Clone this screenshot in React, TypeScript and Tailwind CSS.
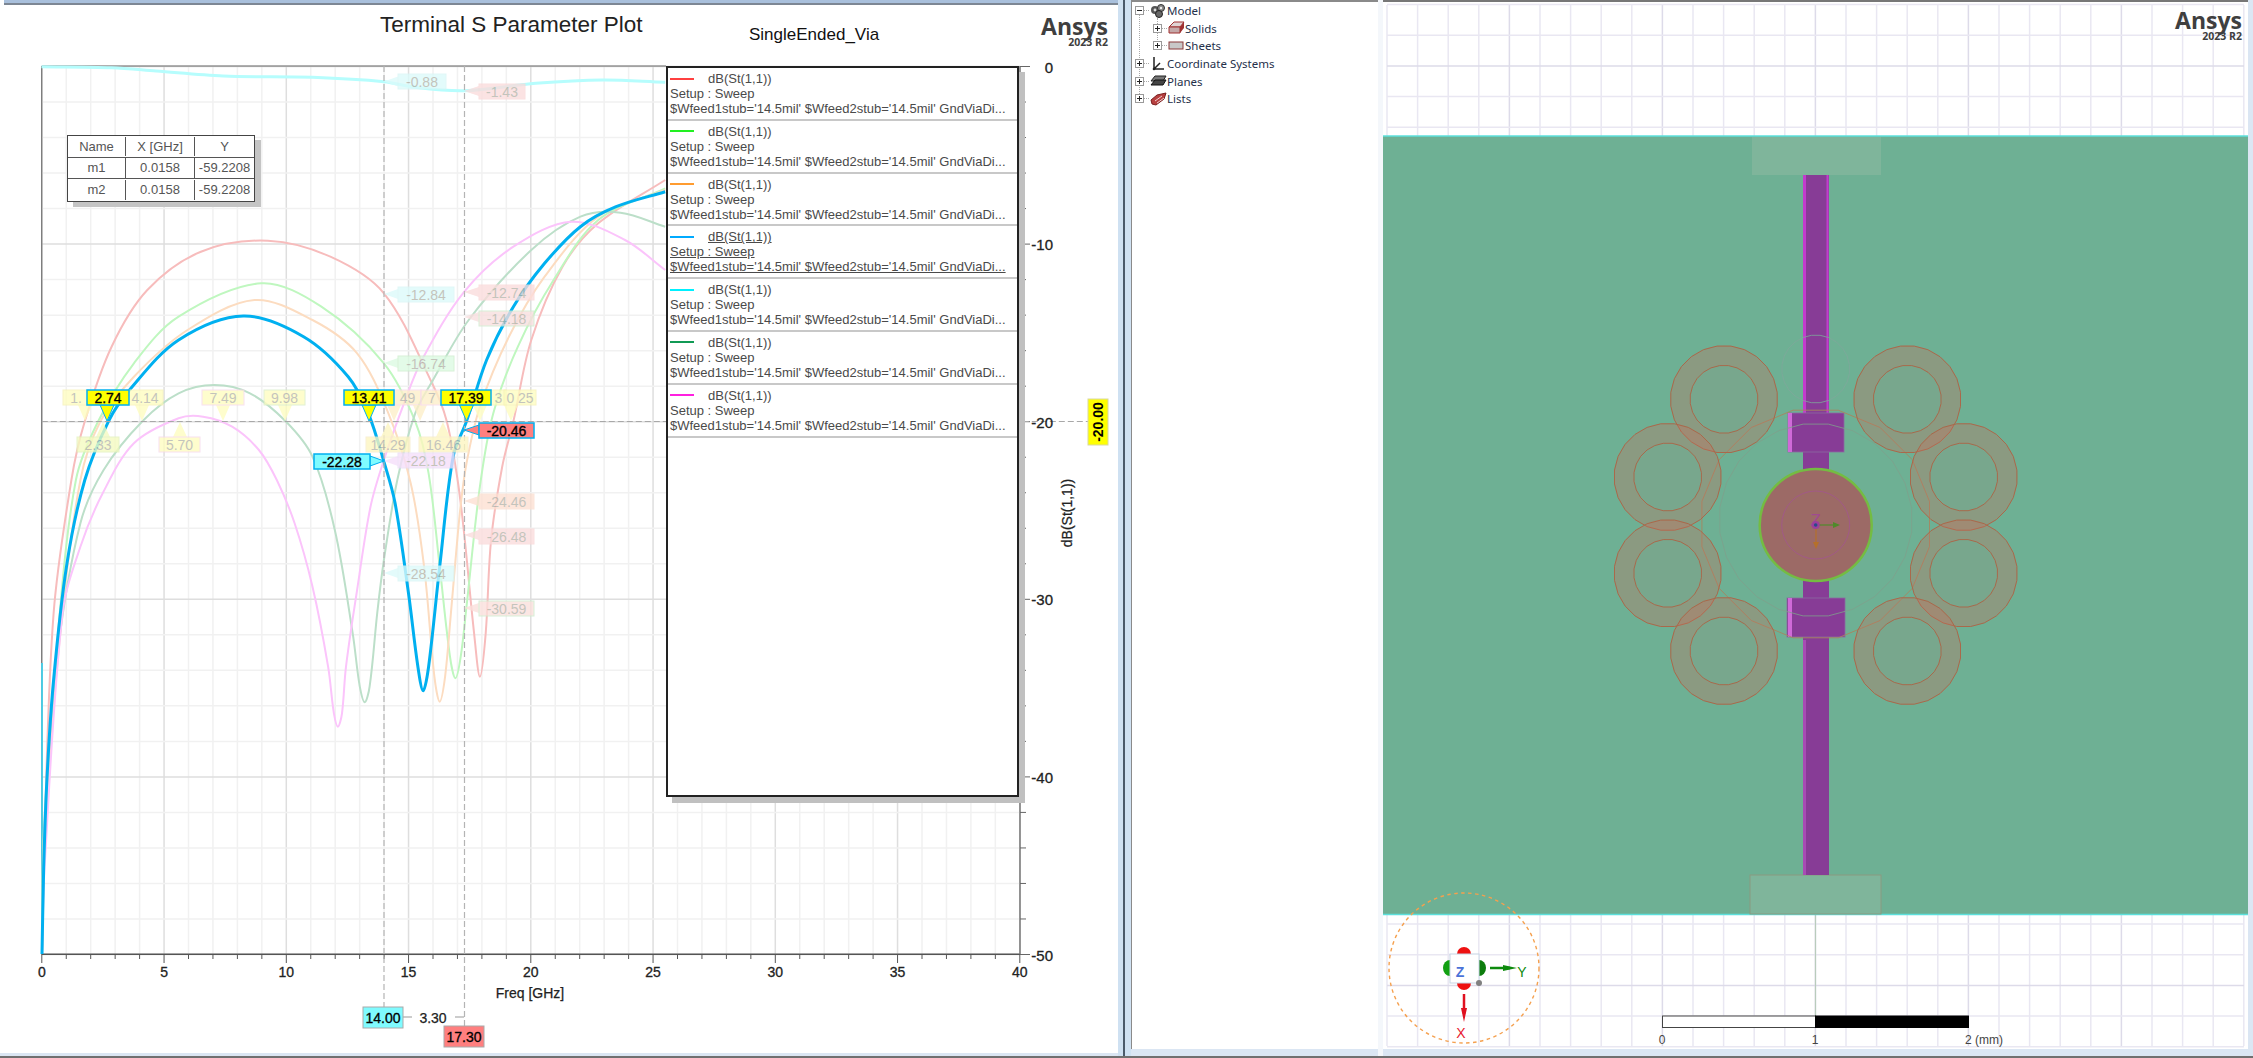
type Pt = [number, number];

// curve points were read off a zoomed crop (x * 2.24, y * 3)
const toPage = (pts: Pt[]): Pt[] => pts.map(([x, y]) => [x / 2.24, y / 3]);

// chord length spline, keeps the arcs clean where the points are unevenly spaced
const smooth = (raw: Pt[]) => {
  const p = toPage(raw);
  const dist = (a: Pt, b: Pt) => Math.hypot(a[0] - b[0], a[1] - b[1]);
  const tangent = (i: number): Pt => {
    const a = p[Math.max(i - 1, 0)];
    const c = p[Math.min(i + 1, p.length - 1)];
    const len = dist(a, p[i]) + dist(p[i], c);
    return [(c[0] - a[0]) / len, (c[1] - a[1]) / len];
  };
  let d = `M${p[0][0].toFixed(1)} ${p[0][1].toFixed(1)}`;
  for (let i = 0; i < p.length - 1; i++) {
    const b = p[i];
    const c = p[i + 1];
    const seg = dist(b, c) / 3;
    const t1 = tangent(i);
    const t2 = tangent(i + 1);
    d += ` C${(b[0] + t1[0] * seg).toFixed(1)} ${(b[1] + t1[1] * seg).toFixed(1)} ${(c[0] - t2[0] * seg).toFixed(1)} ${(c[1] - t2[1] * seg).toFixed(1)} ${c[0].toFixed(1)} ${c[1].toFixed(1)}`;
  }
  return d;
};

const curves: { color: string; width: number; pts: Pt[] }[] = [
  {
    color: "#b6fdfd",
    width: 3,
    pts: [[93, 200], [250, 203], [350, 213], [500, 228], [700, 232], [860, 245], [930, 262], [1040, 272], [1200, 250], [1350, 240], [1490, 247]],
  },
  {
    color: "#f7bcbc",
    width: 2,
    pts: [[94, 2862], [100, 2500], [120, 1840], [160, 1440], [190, 1264], [250, 1040], [330, 870], [450, 755], [600, 722], [740, 770], [860, 880], [968, 1150], [1000, 1260], [1025, 1440], [1040, 1605], [1062, 1900], [1075, 2030], [1088, 1900], [1100, 1620], [1125, 1400], [1150, 1264], [1190, 1020], [1260, 800], [1340, 670], [1490, 540]],
  },
  {
    color: "#bff7bf",
    width: 2,
    pts: [[94, 2862], [99, 2500], [130, 1900], [170, 1440], [220, 1264], [300, 1090], [400, 950], [585, 850], [720, 920], [860, 1090], [930, 1264], [960, 1420], [985, 1700], [1008, 1970], [1020, 2035], [1032, 1970], [1045, 1820], [1075, 1460], [1105, 1240], [1160, 1040], [1240, 840], [1340, 660], [1490, 565]],
  },
  {
    color: "#fcdcc0",
    width: 2,
    pts: [[94, 2862], [100, 2500], [135, 1900], [180, 1440], [225, 1264], [300, 1130], [420, 990], [570, 900], [700, 960], [800, 1060], [870, 1240], [920, 1450], [950, 1700], [973, 2030], [985, 2105], [997, 2030], [1010, 1840], [1030, 1540], [1045, 1390], [1075, 1220], [1140, 1010], [1220, 830], [1340, 650], [1490, 570]],
  },
  {
    color: "#bcdfc9",
    width: 2,
    pts: [[94, 2862], [98, 2500], [130, 1950], [180, 1570], [232, 1410], [320, 1262], [400, 1180], [480, 1155], [560, 1180], [640, 1264], [700, 1370], [750, 1590], [790, 1900], [806, 2060], [817, 2107], [828, 2060], [845, 1840], [860, 1680], [890, 1440], [930, 1240], [970, 1140], [1050, 960], [1190, 750], [1300, 650], [1390, 638], [1490, 680]],
  },
  {
    color: "#fbc4fb",
    width: 2,
    pts: [[94, 2862], [100, 2600], [140, 1840], [180, 1640], [230, 1480], [300, 1330], [400, 1255], [455, 1250], [520, 1280], [580, 1350], [620, 1440], [660, 1570], [700, 1760], [735, 2000], [748, 2140], [757, 2180], [766, 2140], [775, 2000], [800, 1770], [830, 1520], [860, 1380], [905, 1210], [945, 1080], [1040, 875], [1150, 740], [1280, 665], [1400, 720], [1490, 810]],
  },
  {
    color: "#00b0f0",
    width: 3,
    pts: [[94, 2862], [98, 2600], [105, 2340], [120, 2040], [150, 1690], [190, 1440], [243, 1264], [290, 1170], [400, 1020], [545, 948], [680, 1010], [780, 1130], [825, 1240], [860, 1385], [885, 1510], [915, 1780], [936, 2000], [948, 2072], [960, 2000], [985, 1700], [1015, 1370], [1045, 1264], [1090, 1080], [1150, 920], [1220, 790], [1300, 680], [1380, 620], [1490, 575]],
  },
];

const xAt = (ghz: number) => 41.8 + ghz * 24.45;
const yAt = (db: number) => 66.5 + -db * 17.76;
const ghzTicks = Array.from({ length: 41 }, (_, i) => i);
const dbTicks = Array.from({ length: 26 }, (_, i) => i * -2);

type Tag = { x: number; y: number; w: number; h?: number; tx: number; ty: number; text: string; bg: string; line: string; ink?: string };

const Y = { bg: "#fefdc0", line: "#f6f2b6" };
const PINK = { bg: "#fbdcdc", line: "#f9d8d8" };
const CYAN = { bg: "#dcfbfb", line: "#d9f5f5" };
const GREEN = { bg: "#dcfbe2", line: "#cdeecd" };
const LILAC = { bg: "#f6defb", line: "#e9def5" };
const HOT = "#00b0f0";

const tags: Tag[] = [
  { x: 63, y: 390, w: 26, tx: 85, ty: 421, text: "1.", ...Y },
  { x: 127, y: 390, w: 36, tx: 142, ty: 421, text: "4.14", ...Y },
  { x: 202, y: 390, w: 42, tx: 223, ty: 421, text: "7.49", bg: "#fefdc0", line: "#f8d8ec" },
  { x: 264, y: 390, w: 41, tx: 285, ty: 421, text: "9.98", bg: "#fefdc0", line: "#d8ecc8" },
  { x: 394, y: 390, w: 27, tx: 394, ty: 421, text: "49", bg: "#fdefc8", line: "#f8d8ec" },
  { x: 421, y: 390, w: 22, tx: 420, ty: 421, text: "7", bg: "#fdefc8", line: "#f8d8ec" },
  { x: 491, y: 390, w: 15, tx: 480, ty: 421, text: "3", ...Y },
  { x: 504, y: 390, w: 32, tx: 511, ty: 421, text: "0 25", ...Y },
  { x: 77, y: 437, w: 42, tx: 103, ty: 422, text: "2.33", bg: "#f4fbc0", line: "#e2f2bb" },
  { x: 159, y: 437, w: 41, tx: 180, ty: 422, text: "5.70", bg: "#fefdc0", line: "#f8d8ec" },
  { x: 366, y: 437, w: 44, tx: 388, ty: 422, text: "14.29", bg: "#fdf6c0", line: "#f8ecc8" },
  { x: 419, y: 437, w: 49, tx: 443, ty: 422, text: "16.46", bg: "#fdf6c0", line: "#f8ecc8" },
  { x: 398, y: 74, w: 48, tx: 384, ty: 81.5, text: "-0.88", ...CYAN },
  { x: 479, y: 84, w: 46, tx: 464, ty: 91, text: "-1.43", ...PINK },
  { x: 398, y: 287, w: 56, tx: 384, ty: 294, text: "-12.84", ...CYAN },
  { x: 479, y: 285, w: 55, tx: 464, ty: 292, text: "-12.74", ...PINK },
  { x: 479, y: 311, w: 55, tx: 464, ty: 317, text: "-14.18", bg: "#f8dede", line: "#cdeecd" },
  { x: 398, y: 356, w: 56, tx: 384, ty: 363, text: "-16.74", ...GREEN },
  { x: 398, y: 453, w: 56, tx: 384, ty: 461, text: "-22.18", ...LILAC },
  { x: 479, y: 494, w: 55, tx: 464, ty: 501, text: "-24.46", bg: "#fddfd2", line: "#fbe0d0" },
  { x: 479, y: 529, w: 55, tx: 464, ty: 535, text: "-26.48", ...PINK },
  { x: 398, y: 566, w: 56, tx: 384, ty: 573, text: "-28.54", ...CYAN },
  { x: 479, y: 601, w: 55, tx: 464, ty: 608, text: "-30.59", bg: "#fbe0dc", line: "#cdeecd" },
];

const hotTags: Tag[] = [
  { x: 87, y: 390, w: 42, tx: 107, ty: 421, text: "2.74", bg: "#ffff00", line: HOT, ink: "#000" },
  { x: 344, y: 390, w: 50, tx: 369, ty: 421, text: "13.41", bg: "#ffff00", line: HOT, ink: "#000" },
  { x: 441, y: 390, w: 50, tx: 466.5, ty: 421, text: "17.39", bg: "#ffff00", line: HOT, ink: "#000" },
  { x: 479, y: 423, w: 55, tx: 464, ty: 430, text: "-20.46", bg: "#ff7f7f", line: HOT, ink: "#000" },
  { x: 314, y: 454, w: 56, tx: 384, ty: 461, text: "-22.28", bg: "#7ffbff", line: HOT, ink: "#000" },
];

const TagMark = ({ t }: { t: Tag }) => {
  const h = t.h ?? 15;
  const ink = t.ink ?? "#b4b4aa";
  const cx = t.x + t.w / 2;
  let tip = "";
  if (t.ty > t.y + h) tip = `${t.tx - 7},${t.y + h} ${t.tx},${t.ty} ${t.tx + 7},${t.y + h}`;
  else if (t.ty < t.y) tip = `${t.tx - 7},${t.y} ${t.tx},${t.ty} ${t.tx + 7},${t.y}`;
  else if (t.tx < t.x) tip = `${t.x},${t.ty - 5} ${t.tx},${t.ty} ${t.x},${t.ty + 5}`;
  else tip = `${t.x + t.w},${t.ty - 5} ${t.tx},${t.ty} ${t.x + t.w},${t.ty + 5}`;
  return (
    <g opacity={t.ink ? 1 : 0.78}>
      <polygon points={tip} fill={t.bg} stroke={t.ink ? t.line : "none"} strokeWidth={1} />
      <rect x={t.x} y={t.y} width={t.w} height={h} fill={t.bg} stroke={t.line} strokeWidth={t.ink ? 1.5 : 1} />
      <text x={cx} y={t.y + h / 2 + 5} textAnchor="middle" fontSize={14} fill={ink} stroke={t.ink ? ink : "none"} strokeWidth={0.35}>
        {t.text}
      </text>
    </g>
  );
};

const Chart = () => (
  <svg width={1118} height={989} viewBox="0 60 1118 989" className="absolute left-0 top-0 block">
    {ghzTicks.map((g) => (
      <line key={g} x1={xAt(g)} x2={xAt(g)} y1={66} y2={954} stroke={g % 5 === 0 ? "#dedede" : "#f1f1f1"} strokeWidth={1.5} />
    ))}
    {dbTicks.map((d) => (
      <line key={d} x1={41.8} x2={1020} y1={yAt(d)} y2={yAt(d)} stroke={d % 10 === 0 ? "#dedede" : "#f1f1f1"} strokeWidth={1.5} />
    ))}
    <line x1={41.8} x2={666} y1={66} y2={66} stroke="#666" />
    <line x1={41.8} x2={41.8} y1={66} y2={663} stroke="#555" />
    <line x1={42} x2={42} y1={663} y2={954} stroke="#1cc0e0" strokeWidth={1.5} />
    <line x1={41.8} x2={1020} y1={954.3} y2={954.3} stroke="#555" strokeWidth={1.5} />
    <line x1={1020} x2={1020} y1={66} y2={954.3} stroke="#777" strokeWidth={1.5} />

    {ghzTicks.map((g) => (
      <line key={g} x1={xAt(g)} x2={xAt(g)} y1={954} y2={g % 5 === 0 ? 963 : 959} stroke="#555" />
    ))}
    {dbTicks.map((d) => (
      <line key={d} x1={1020} x2={d % 10 === 0 ? 1030 : 1026} y1={yAt(d)} y2={yAt(d)} stroke="#666" />
    ))}

    {curves.map((c) => (
      <path key={c.color} d={smooth(c.pts)} fill="none" stroke={c.color} strokeWidth={c.width} strokeLinejoin="round" />
    ))}

    <line x1={384} x2={384} y1={66} y2={1007} stroke="#b4b4b4" strokeWidth={1.2} strokeDasharray="6 3" />
    <line x1={464.5} x2={464.5} y1={66} y2={1026} stroke="#b4b4b4" strokeWidth={1.2} strokeDasharray="6 3" />
    <line x1={41.8} x2={1088} y1={421.5} y2={421.5} stroke="#a8a8a8" strokeWidth={1.2} strokeDasharray="6 3" />

    {tags.map((t) => (
      <TagMark key={t.text + t.x} t={t} />
    ))}
    {hotTags.map((t) => (
      <TagMark key={t.text} t={t} />
    ))}

    {[0, 5, 10, 15, 20, 25, 30, 35, 40].map((g) => (
      <text key={g} x={xAt(g)} y={977} textAnchor="middle" fontSize={14} fill="#222" stroke="#222" strokeWidth={0.3}>
        {g}
      </text>
    ))}
    {[0, -10, -20, -30, -40, -50].map((d) => (
      <text key={d} x={1053} y={yAt(d) + 6} textAnchor="end" fontSize={15} fill="#222" stroke="#222" strokeWidth={0.3}>
        {d}
      </text>
    ))}
    <text x={530} y={998} textAnchor="middle" fontSize={14} fill="#222" stroke="#222" strokeWidth={0.25}>
      Freq [GHz]
    </text>
    <text transform="translate(1072 513) rotate(-90)" textAnchor="middle" fontSize={14} fill="#222" stroke="#222" strokeWidth={0.25}>
      dB(St(1,1))
    </text>

    <rect x={1088} y={399} width={20} height={46} fill="#ffff00" stroke="#d9d9a0" />
    <text transform="translate(1103 422) rotate(-90)" textAnchor="middle" fontSize={14} fontWeight={700} fill="#000">
      -20.00
    </text>

    <line x1={403} x2={412} y1={1017} y2={1017} stroke="#bbb" strokeWidth={1.5} />
    <line x1={455} x2={464} y1={1017} y2={1017} stroke="#bbb" strokeWidth={1.5} />
    <rect x={363} y={1007} width={40} height={21} fill="#7ffbff" stroke="#aaa" />
    <text x={383} y={1023} textAnchor="middle" fontSize={14} fill="#000" stroke="#000" strokeWidth={0.3}>
      14.00
    </text>
    <text x={433} y={1023} textAnchor="middle" fontSize={14} fill="#222" stroke="#222" strokeWidth={0.25}>
      3.30
    </text>
    <rect x={444} y={1026} width={40} height={21} fill="#ff7f7f" stroke="#aaa" />
    <text x={464} y={1042} textAnchor="middle" fontSize={14} fill="#000" stroke="#000" strokeWidth={0.3}>
      17.30
    </text>
  </svg>
);

const MarkerTable = () => (
  <div className="absolute left-[67px] top-[75px] w-[188px] border border-[#444] bg-white text-[13px] text-[#555] shadow-[6px_5px_0_#c4c4c4]">
    <div className="grid h-[21.5px] grid-cols-[57px_70px_1fr] items-center border-b border-[#555] text-center">
      <span>Name</span>
      <span className="border-x border-[#555]">X [GHz]</span>
      <span>Y</span>
    </div>
    <div className="grid h-[21.5px] grid-cols-[57px_70px_1fr] items-center border-b border-[#555] text-center">
      <span>m1</span>
      <span className="border-x border-[#555]">0.0158</span>
      <span>-59.2208</span>
    </div>
    <div className="grid h-[21.5px] grid-cols-[57px_70px_1fr] items-center text-center">
      <span>m2</span>
      <span className="border-x border-[#555]">0.0158</span>
      <span>-59.2208</span>
    </div>
  </div>
);

const legendColors = ["#ff4040", "#22f022", "#ff9c30", "#00aaff", "#00f0ff", "#119a55", "#ff20e0"];

const Legend = () => (
  <div className="absolute left-[666px] top-[6px] flex h-[731px] w-[353px] flex-col border-2 border-[#222] bg-white text-[13px] leading-[15px] text-[#4a4a4a] shadow-[6px_6px_0_#c0c0c0]">
    {legendColors.map((c, i) => (
      <div key={c} className="h-[52.8px] shrink-0 border-b-2 border-[#c8c8c8] pl-[2px] pt-[3px]">
        <div className="flex items-center">
          <svg width={24} height={2} className="block">
            <rect width={24} height={2} fill={c} />
          </svg>
          <span className={i === 3 ? "ml-[14px] underline" : "ml-[14px]"}>dB(St(1,1))</span>
        </div>
        <div className={i === 3 ? "underline" : ""}>Setup : Sweep</div>
        <div className={i === 3 ? "whitespace-nowrap underline" : "whitespace-nowrap"}>
          $Wfeed1stub='14.5mil' $Wfeed2stub='14.5mil' GndViaDi...
        </div>
      </div>
    ))}
  </div>
);

const pads: Pt[] = [
  [1724, 399.3],
  [1907.3, 399.3],
  [1667.7, 477],
  [1963.7, 477],
  [1667.7, 573.3],
  [1963.7, 573.3],
  [1724, 651],
  [1907.3, 651],
];

const ngon = (cx: number, cy: number, r: number, n = 24) =>
  Array.from({ length: n }, (_, i) => {
    const a = (i / n) * Math.PI * 2 + Math.PI / n;
    return `${(cx + r * Math.cos(a)).toFixed(1)},${(cy + r * Math.sin(a)).toFixed(1)}`;
  }).join(" ");

const gridX = Array.from({ length: 29 }, (_, k) => k);
const gridY = Array.from({ length: 35 }, (_, k) => k);

const Viewport = () => (
  <svg width={865} height={1047} viewBox="1383 2 865 1047" className="block">
    <rect x={1383} y={2} width={865} height={1047} fill="#fff" />
    {gridX.map((k) => (
      <line key={k} x1={1387 + k * 30.6} x2={1387 + k * 30.6} y1={5} y2={1046} stroke={k % 5 === 4 ? "#dddbe9" : "#e9e7f2"} strokeWidth={1.5} />
    ))}
    {gridY.map((k) => (
      <line key={k} x1={1387} x2={2244} y1={4.6 + k * 30.65} y2={4.6 + k * 30.65} stroke={k % 5 === 2 ? "#dddbe9" : "#e9e7f2"} strokeWidth={1.5} />
    ))}
    <line x1={1815.5} x2={1815.5} y1={914} y2={1016} stroke="#b9ccbc" strokeWidth={1.2} />

    <rect x={1383} y={136} width={865} height={778.5} fill="#6eb094" />
    <line x1={1383} x2={2248} y1={136} y2={136} stroke="#5ce0dc" strokeWidth={1.5} />
    <line x1={1383} x2={2248} y1={914.5} y2={914.5} stroke="#5ce0dc" strokeWidth={1.5} />

    <rect x={1752} y={137} width={129} height={38} fill="#7fb59b" />
    <rect x={1750} y={875} width={131} height={39} fill="#7fb59b" stroke="#8a9a80" />

    <rect x={1803} y={175} width={26} height={700} fill="#873c96" />
    <rect x={1803} y={175} width={3} height={238} fill="#c33ccd" />
    <rect x={1826.5} y={175} width={2} height={238} fill="#c33ccd" />
    <rect x={1803} y={640} width={3} height={235} fill="#a84cb4" />
    <rect x={1788} y={413} width={56} height={39} fill="#873c96" stroke="#8a6aa0" strokeWidth={0.8} />
    <rect x={1788} y={413} width={4} height={39} fill="#cf6ad8" />
    <rect x={1787} y={598} width={58} height={39} fill="#873c96" stroke="#8a6aa0" strokeWidth={0.8} />
    <rect x={1788} y={598} width={4} height={39} fill="#cf6ad8" />

    <polygon points={ngon(1815.7, 369, 34)} fill="none" stroke="#7fa79a" strokeWidth={0.8} />
    <polygon points={ngon(1815.7, 520, 96.7)} fill="none" stroke="#7f9f8c" strokeWidth={0.8} />
    <polygon points={ngon(1815.7, 524, 116, 16)} fill="none" stroke="#a8855f" strokeWidth={0.9} />

    {pads.map(([cx, cy]) => (
      <g key={`${cx}-${cy}`}>
        <path
          d={`M${cx - 53.7} ${cy}a53.7 53.7 0 1 0 107.4 0a53.7 53.7 0 1 0 -107.4 0zM${cx - 34} ${cy}a34 34 0 1 0 68 0a34 34 0 1 0 -68 0z`}
          fill="#c86e5a"
          fillOpacity={0.33}
          fillRule="evenodd"
        />
        <polygon points={ngon(cx, cy, 53.7)} fill="none" stroke="#a9694b" strokeWidth={1} />
        <polygon points={ngon(cx, cy, 34)} fill="#c86e5a" fillOpacity={0.12} stroke="#a9694b" strokeWidth={1} />
      </g>
    ))}

    <circle cx={1815.7} cy={525} r={56} fill="#9c6a66" stroke="#74bc42" strokeWidth={2.5} />
    <circle cx={1815.7} cy={525} r={34} fill="none" stroke="#a2578a" strokeWidth={0.9} />
    <text x={1815.7} y={526} textAnchor="middle" fontSize={17} fill="#a04a90">
      Z
    </text>
    <line x1={1816} x2={1836} y1={525} y2={525} stroke="#4f8a2a" strokeWidth={1.2} />
    <polygon points="1833,522 1840,525 1833,528" fill="#4f8a2a" />
    <line x1={1816} x2={1816} y1={525} y2={545} stroke="#b5702a" strokeWidth={1.2} />
    <polygon points="1813,542 1816,549 1819,542" fill="#b5702a" />
    <circle cx={1815.7} cy={525} r={4} fill="#9c3f9c" />
    <circle cx={1815.7} cy={525} r={1.8} fill="#2a4a8a" />

    <circle cx={1464} cy={968} r={75} fill="none" stroke="#f5a04e" strokeWidth={1.4} strokeDasharray="3.5 3.5" />
    <ellipse cx={1464} cy={954} rx={7} ry={7} fill="#ee1111" />
    <ellipse cx={1464} cy={983} rx={7} ry={7} fill="#ee1111" />
    <ellipse cx={1450} cy={968} rx={7} ry={8} fill="#12a012" />
    <ellipse cx={1479} cy={968} rx={7} ry={8} fill="#0d7d0d" />
    <rect x={1450} y={954} width={29} height={29} fill="#fff" stroke="#c6d4e4" />
    <text x={1460} y={977} textAnchor="middle" fontSize={14} fontWeight={700} fill="#4a72d8">
      Z
    </text>
    <circle cx={1479} cy={983} r={3} fill="#808080" />
    <line x1={1490} x2={1510} y1={968} y2={968} stroke="#0d8a0d" strokeWidth={2.5} />
    <polygon points="1503,965 1517,968 1503,971" fill="#0d8a0d" />
    <text x={1522} y={977} textAnchor="middle" fontSize={14} fill="#0d8a0d">
      Y
    </text>
    <line x1={1464} x2={1464} y1={994} y2={1014} stroke="#e01020" strokeWidth={2.5} />
    <polygon points="1461,1008 1464,1022 1467,1008" fill="#e01020" />
    <text x={1461} y={1038} textAnchor="middle" fontSize={14} fill="#e82030">
      X
    </text>

    <rect x={1662.5} y={1016} width={153} height={11.5} fill="#fff" stroke="#444" />
    <rect x={1815.5} y={1016} width={153} height={11.5} fill="#000" stroke="#000" />
    <text x={1662} y={1044} textAnchor="middle" fontSize={12} fill="#444">
      0
    </text>
    <text x={1815} y={1044} textAnchor="middle" fontSize={12} fill="#444">
      1
    </text>
    <text x={1965} y={1044} fontSize={12} fill="#444">
      2 (mm)
    </text>
  </svg>
);

const Logo = ({ className }: { className: string }) => (
  <div className={`${className} flex flex-col items-end font-['Open_Sans',sans-serif] font-bold text-[#3f3f3f]`}>
    <span className="text-[23px] leading-[21px]">Ansys</span>
    <span className="text-[10.5px] leading-[10px]">2023 R2</span>
  </div>
);

const Toggle = ({ open }: { open?: boolean }) => (
  <span className="relative z-10 flex h-[9px] w-[9px] shrink-0 items-center justify-center border border-[#9a9a9a] bg-white">
    <span className="h-px w-[5px] bg-[#222]" />
    {!open && <span className="absolute h-[5px] w-px bg-[#222]" />}
  </span>
);

const TreeIcon = ({ name }: { name: string }) => {
  if (name === "Model")
    return (
      <svg width={17} height={16} viewBox="0 0 17 16">
        <circle cx={5} cy={7} r={4} fill="#555" />
        <circle cx={11} cy={5} r={3.5} fill="#888" stroke="#333" />
        <circle cx={9} cy={11} r={3.5} fill="#666" stroke="#222" />
        <circle cx={5} cy={7} r={1.4} fill="#ddd" />
        <circle cx={11} cy={5} r={1.2} fill="#eee" />
      </svg>
    );
  if (name === "Solids")
    return (
      <svg width={17} height={14} viewBox="0 0 17 14">
        <polygon points="1,6 12,6 16,1 6,1" fill="#e0d4d4" stroke="#a03030" />
        <polygon points="1,6 12,6 12,12 1,12" fill="#c4a8a8" stroke="#a03030" />
        <polygon points="12,6 16,1 16,7 12,12" fill="#a03030" />
      </svg>
    );
  if (name === "Sheets")
    return (
      <svg width={17} height={10} viewBox="0 0 17 10">
        <rect x={1} y={1} width={14} height={7} fill="#c8c8c8" stroke="#8a3a3a" />
      </svg>
    );
  if (name === "Coordinate Systems")
    return (
      <svg width={17} height={16} viewBox="0 0 17 16">
        <path d="M4 1V13H14M4 13L10 7" fill="none" stroke="#222" strokeWidth={1.5} />
        <circle cx={4} cy={13} r={1.3} fill="#222" />
      </svg>
    );
  if (name === "Planes")
    return (
      <svg width={17} height={12} viewBox="0 0 17 12">
        <polygon points="1,6 5,1 16,1 13,6" fill="#777" stroke="#222" />
        <polygon points="1,10 5,5 16,5 13,10" fill="#444" stroke="#111" />
      </svg>
    );
  return (
    <svg width={17} height={14} viewBox="0 0 17 14">
      <polygon points="1,8 7,3 16,1 14,7 6,13 2,12" fill="#b84040" stroke="#7a1f1f" />
      <path d="M5 9L12 4M7 11L14 6" stroke="#f0d0d0" />
    </svg>
  );
};

const TreeRow = ({ name, sub, open }: { name: string; sub?: boolean; open?: boolean }) => (
  <div className={`flex h-[17.6px] items-center ${sub ? "pl-[21px]" : "pl-[3px]"}`}>
    <Toggle open={open} />
    <span className="w-[5px] border-t border-dotted border-[#aaa]" />
    <span className="flex w-[18px] shrink-0 justify-center">
      <TreeIcon name={name} />
    </span>
    <span className="whitespace-nowrap">{name}</span>
  </div>
);

const ModelTree = () => (
  <div className="relative font-['Noto_Sans',sans-serif] text-[11.5px] text-[#25304a]">
    <span className="absolute left-[7px] top-[12px] h-[86px] border-l border-dotted border-[#aaa]" />
    <span className="absolute left-[25px] top-[16px] h-[28px] border-l border-dotted border-[#aaa]" />
    <TreeRow name="Model" open />
    <TreeRow name="Solids" sub />
    <TreeRow name="Sheets" sub />
    <TreeRow name="Coordinate Systems" />
    <TreeRow name="Planes" />
    <TreeRow name="Lists" />
  </div>
);

export default function App() {
  return (
    <div className="flex h-[1058px] w-[2253px] flex-col overflow-hidden bg-[#dbe6f3] font-['Liberation_Sans',Arial,sans-serif]">
      <div className="flex h-[1056px]">
        {/* S parameter plot */}
        <div className="flex h-[1053px] w-[1118px] shrink-0 flex-col bg-white">
          <div className="ml-[4px] h-[5px] border-b-2 border-[#7d8794] bg-[#a9c0dc]" />
          <div className="relative h-[55px] shrink-0">
            <div className="absolute left-[380px] top-[6px] text-[22.5px] leading-[28px] text-[#222]">Terminal S Parameter Plot</div>
            <div className="absolute left-[749px] top-[18px] text-[17px] leading-[24px] text-[#111]">SingleEnded_Via</div>
            <Logo className="absolute right-[10px] top-[11px]" />
          </div>
          <div className="relative flex-1">
            <Chart />
            <MarkerTable />
            <Legend />
          </div>
        </div>

        <div className="w-[13px] shrink-0 bg-[#cfe1f2] pl-[5px]">
          <div className="h-full w-[2px] bg-[#4a5a6a]" />
        </div>

        {/* project tree */}
        <div className="mb-[7px] w-[247px] shrink-0 border-l border-t-2 border-[#8a8a8a] bg-white">
          <ModelTree />
        </div>

        <div className="w-[5px] shrink-0 bg-[#f4f7fb]" />

        {/* 3d view */}
        <div className="relative mb-[7px] w-[865px] shrink-0 border-t-2 border-[#777] bg-white">
          <Viewport />
          <Logo className="absolute right-[6px] top-[8px]" />
        </div>
      </div>
      <div className="h-[2px] bg-[#707070]" />
    </div>
  );
}
